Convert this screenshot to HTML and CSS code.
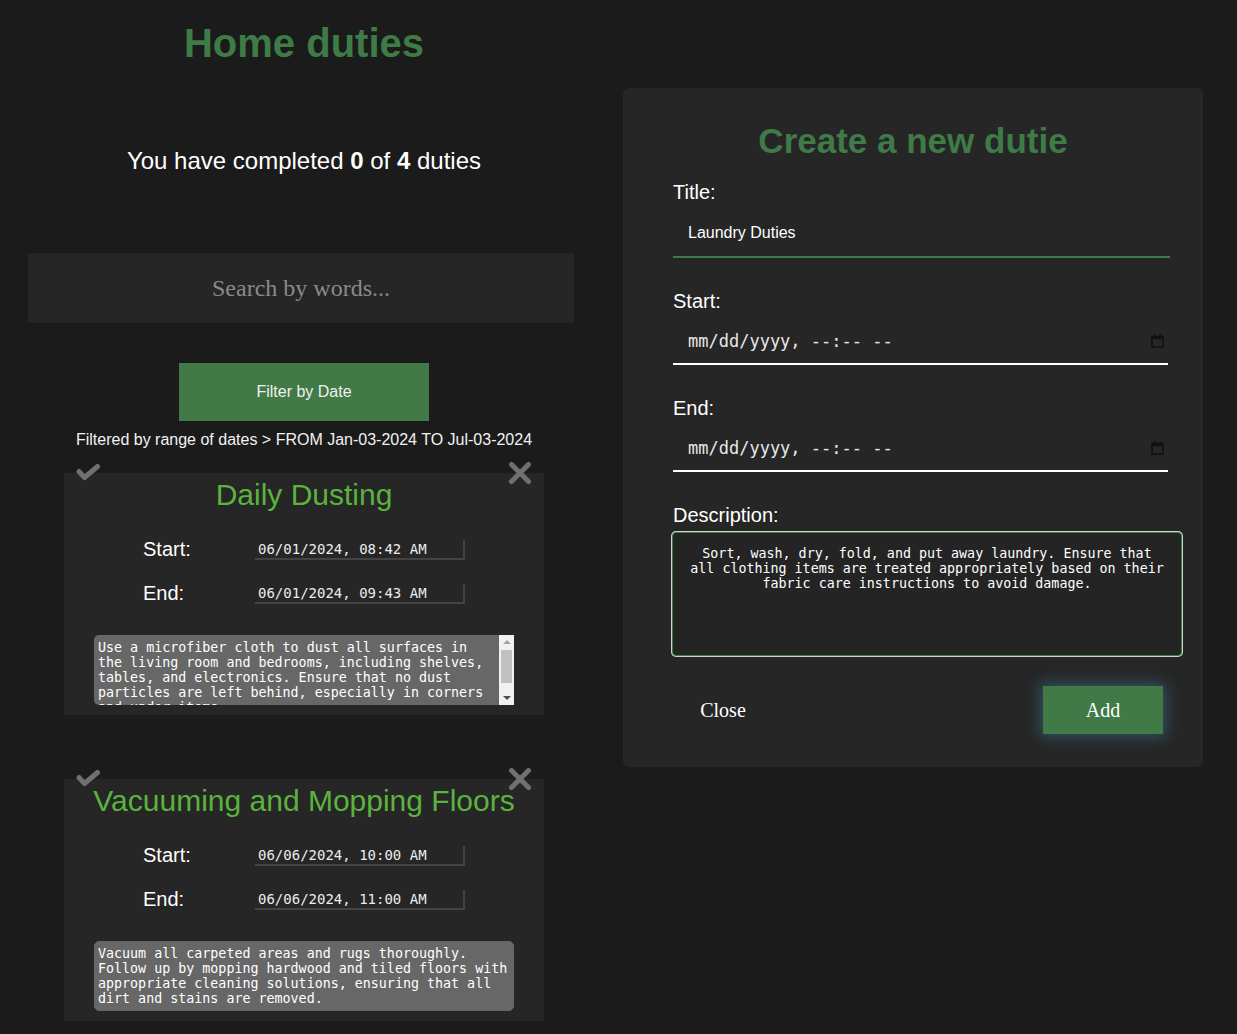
FILE: index.html
```html
<!DOCTYPE html>
<html lang="en">
<head>
<meta charset="utf-8">
<title>Home duties</title>
<link rel="stylesheet" href="styles.css">
</head>
<body>
<div class="page">
  <main class="left">
    <h1 class="app-title">Home duties</h1>
    <p class="progress">You have completed <b>0</b> of <b>4</b> duties</p>
    <input class="search" type="text" placeholder="Search by words...">
    <button class="filter-btn" type="button">Filter by Date</button>
    <div class="filter-info">Filtered by range of dates &gt; FROM Jan-03-2024 TO Jul-03-2024</div>

    <article class="card">
      <svg class="icon-check" width="26" height="20" viewBox="0 0 26 20"><path d="M4 8.5 L9.5 14.5 L22.5 3.5" fill="none" stroke="#707070" stroke-width="5" stroke-linecap="round" stroke-linejoin="round"/></svg>
      <svg class="icon-close" width="26" height="26" viewBox="0 0 26 26"><path d="M4.5 4.5 L21.5 21.5 M21.5 4.5 L4.5 21.5" fill="none" stroke="#707070" stroke-width="5" stroke-linecap="round"/></svg>
      <h3 class="card-title">Daily Dusting</h3>
      <div class="row"><span class="row-label">Start:</span><span class="date-field">06/01/2024, 08:42 AM</span></div>
      <div class="row row-2"><span class="row-label">End:</span><span class="date-field">06/01/2024, 09:43 AM</span></div>
      <div class="desc-wrap">
        <textarea class="wrap-desc" readonly>Use a microfiber cloth to dust all surfaces in the living room and bedrooms, including shelves, tables, and electronics. Ensure that no dust particles are left behind, especially in corners and under items.</textarea>
        <div class="scrollbar">
          <span class="arrow-up"></span>
          <span class="thumb"></span>
          <span class="track"></span>
          <span class="arrow-down"></span>
        </div>
      </div>
    </article>

    <article class="card card-2">
      <svg class="icon-check" width="26" height="20" viewBox="0 0 26 20"><path d="M4 8.5 L9.5 14.5 L22.5 3.5" fill="none" stroke="#707070" stroke-width="5" stroke-linecap="round" stroke-linejoin="round"/></svg>
      <svg class="icon-close" width="26" height="26" viewBox="0 0 26 26"><path d="M4.5 4.5 L21.5 21.5 M21.5 4.5 L4.5 21.5" fill="none" stroke="#707070" stroke-width="5" stroke-linecap="round"/></svg>
      <h3 class="card-title">Vacuuming and Mopping Floors</h3>
      <div class="row"><span class="row-label">Start:</span><span class="date-field">06/06/2024, 10:00 AM</span></div>
      <div class="row row-2"><span class="row-label">End:</span><span class="date-field">06/06/2024, 11:00 AM</span></div>
      <textarea class="card-desc" readonly>Vacuum all carpeted areas and rugs thoroughly. Follow up by mopping hardwood and tiled floors with appropriate cleaning solutions, ensuring that all dirt and stains are removed.</textarea>
    </article>
  </main>

  <aside class="right">
    <form class="modal">
      <h2 class="modal-title">Create a new dutie</h2>
      <label class="field-label first">Title:</label>
      <input class="title-input" type="text" value="Laundry Duties">
      <label class="field-label">Start:</label>
      <div class="dt-input"><span>mm/dd/yyyy, --:-- --</span><svg width="13" height="14" viewBox="0 0 13 14"><rect x="1" y="2.6" width="11" height="10.4" fill="none" stroke="#111" stroke-width="1.6"/><rect x="1" y="2.6" width="11" height="2.6" fill="#111"/><rect x="2.8" y="0.4" width="1.6" height="3" fill="#111"/><rect x="8.6" y="0.4" width="1.6" height="3" fill="#111"/></svg></div>
      <label class="field-label">End:</label>
      <div class="dt-input"><span>mm/dd/yyyy, --:-- --</span><svg width="13" height="14" viewBox="0 0 13 14"><rect x="1" y="2.6" width="11" height="10.4" fill="none" stroke="#111" stroke-width="1.6"/><rect x="1" y="2.6" width="11" height="2.6" fill="#111"/><rect x="2.8" y="0.4" width="1.6" height="3" fill="#111"/><rect x="8.6" y="0.4" width="1.6" height="3" fill="#111"/></svg></div>
      <label class="field-label">Description:</label>
      <textarea class="modal-desc">Sort, wash, dry, fold, and put away laundry. Ensure that all clothing items are treated appropriately based on their fabric care instructions to avoid damage.</textarea>
      <div class="actions">
        <button class="btn-close" type="button">Close</button>
        <button class="btn-add" type="button">Add</button>
      </div>
    </form>
  </aside>
</div>
</body>
</html>
```

FILE: styles.css
```css
* { box-sizing: border-box; }

html, body {
  margin: 0;
  background: #1b1b1b;
  color: #ffffff;
  font-family: "Liberation Sans", Arial, sans-serif;
}

.page {
  display: flex;
  align-items: flex-start;
}

.left {
  width: 608px;
  display: flex;
  flex-direction: column;
  align-items: center;
  padding-bottom: 40px;
}

.app-title {
  margin: 20px 0 0;
  font-size: 40px;
  line-height: 46px;
  font-weight: bold;
  color: #3e7b47;
}

.progress {
  margin: 81px 0 0;
  font-size: 24px;
  line-height: 28px;
  color: #ffffff;
}

.search {
  align-self: flex-start;
  margin: 78px 0 0 28px;
  width: 546px;
  height: 70px;
  background: #262626;
  border: 1px solid #222529;
  color: #dddddd;
  font-family: "Liberation Serif", "Times New Roman", serif;
  font-size: 24px;
  text-align: center;
  outline: none;
}
.search::placeholder { color: #8a8a8a; }

.filter-btn {
  margin-top: 40px;
  width: 250px;
  height: 58px;
  background: #417a47;
  border: none;
  color: #f0f0f0;
  font-family: "Liberation Sans", Arial, sans-serif;
  font-size: 16px;
}

.filter-info {
  margin-top: 10px;
  font-size: 16px;
  line-height: 18px;
  color: #f2f2f2;
}

.card {
  position: relative;
  width: 480px;
  margin-top: 24px;
  padding: 5px 0 10px;
  background: #262626;
  display: flex;
  flex-direction: column;
  align-items: center;
}
.card-2 { margin-top: 64px; }

.icon-check {
  position: absolute;
  left: 11px;
  top: -10px;
}
.icon-close {
  position: absolute;
  left: 443px;
  top: -13px;
}

.card-title {
  margin: 0;
  font-size: 30px;
  line-height: 34px;
  font-weight: normal;
  color: #5ab33d;
  white-space: nowrap;
}

.row {
  display: flex;
  align-items: center;
  margin-top: 26px;
  height: 23px;
}
.row-2 { margin-top: 21px; }

.row-label {
  width: 112px;
  font-size: 20px;
  line-height: 23px;
  color: #ffffff;
}

.date-field {
  width: 210px;
  height: 20px;
  padding: 0 0 0 3px;
  border-right: 2px solid #434343;
  border-bottom: 2px solid #434343;
  font-family: "DejaVu Sans Mono", "Liberation Mono", monospace;
  font-size: 14px;
  line-height: 18px;
  color: #ececec;
}

.card-desc {
  margin-top: 30px;
  width: 420px;
  height: 70px;
  padding: 4px 3px;
  border: 1px solid #676767;
  border-radius: 5px;
  background: #676767;
  color: #ffffff;
  font-family: "DejaVu Sans Mono", "Liberation Mono", monospace;
  font-size: 13.333px;
  line-height: 15px;
  resize: none;
  outline: none;
}

.desc-wrap {
  margin-top: 30px;
  width: 420px;
  height: 70px;
  display: flex;
  background: #676767;
  border-radius: 5px 0 0 5px;
  overflow: hidden;
}

.wrap-desc {
  flex: 1;
  height: 70px;
  padding: 5px 3px 4px 4px;
  border: none;
  background: transparent;
  color: #ffffff;
  font-family: "DejaVu Sans Mono", "Liberation Mono", monospace;
  font-size: 13.333px;
  line-height: 15px;
  resize: none;
  outline: none;
  overflow: hidden;
}

.scrollbar {
  width: 15px;
  height: 70px;
  background: #f1f1f1;
  display: flex;
  flex-direction: column;
  align-items: center;
}
.arrow-up {
  margin-top: 5px;
  width: 0;
  height: 0;
  border-left: 4px solid transparent;
  border-right: 4px solid transparent;
  border-bottom: 4px solid #a3a3a3;
}
.thumb {
  margin-top: 6px;
  width: 11px;
  height: 33px;
  background: #c1c1c1;
}
.track { flex: 1; }
.arrow-down {
  margin-bottom: 5px;
  width: 0;
  height: 0;
  border-left: 4px solid transparent;
  border-right: 4px solid transparent;
  border-top: 4px solid #505050;
}

.right {
  padding-top: 88px;
}

.modal {
  margin: 0 0 0 15px;
  width: 580px;
  padding: 33px 0 33px;
  background: #262626;
  border-radius: 6px;
  display: flex;
  flex-direction: column;
  align-items: flex-start;
}

.modal-title {
  align-self: stretch;
  margin: 0;
  text-align: center;
  font-size: 35px;
  line-height: 40px;
  font-weight: bold;
  color: #3e7b47;
}

.field-label {
  margin: 32px 0 0 50px;
  font-size: 20px;
  line-height: 23px;
  color: #ffffff;
}
.field-label.first { margin-top: 20px; }

.title-input {
  margin: 5px 0 0 50px;
  width: 497px;
  height: 49px;
  padding: 0 15px;
  background: transparent;
  border: none;
  border-bottom: 2px solid #3e7b47;
  color: #ffffff;
  font-family: "Liberation Sans", Arial, sans-serif;
  font-size: 16px;
  outline: none;
}

.dt-input {
  margin: 5px 0 0 50px;
  width: 495px;
  height: 47px;
  padding: 0 4px 0 15px;
  border-bottom: 2px solid #ffffff;
  display: flex;
  align-items: center;
  justify-content: space-between;
  font-family: "DejaVu Sans Mono", "Liberation Mono", monospace;
  font-size: 17px;
  color: #e6e6e6;
}
.dt-input span { white-space: pre; }

.modal-desc {
  margin: 5px 0 0 49px;
  width: 510px;
  height: 124px;
  padding: 13px 14px 12px;
  background: #242424;
  border: 1px solid #3f7a47;
  border-radius: 4px;
  box-shadow: 0 0 0 1px #c8d8c8;
  color: #ffffff;
  font-family: "DejaVu Sans Mono", "Liberation Mono", monospace;
  font-size: 13.333px;
  line-height: 15px;
  text-align: center;
  resize: none;
  outline: none;
}

.actions {
  margin: 30px 0 0 40px;
  width: 500px;
  display: flex;
  justify-content: space-between;
}

.btn-close,
.btn-add {
  width: 120px;
  height: 48px;
  border: none;
  font-family: "Liberation Serif", "Times New Roman", serif;
  font-size: 20px;
  color: #ffffff;
}
.btn-close { background: transparent; }
.btn-add {
  background: #417a47;
  box-shadow: 0 0 14px 3px rgba(60, 140, 170, 0.45);
}
```
